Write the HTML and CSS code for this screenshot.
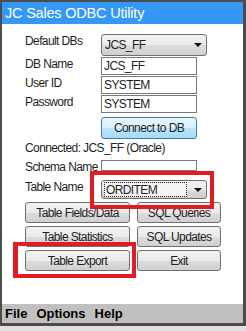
FILE: index.html
```html
<!DOCTYPE html>
<html>
<head>
    <title>JC Sales ODBC Utility</title>
    <link rel="stylesheet" href="styles.css">
</head>
<body>
    <div class="window">
        <div class="titlebar">JC Sales ODBC Utility</div>
        <div class="content">
            <div class="row">
                <label>Default DBs</label>
                <div class="combo"><span class="combo-text">JCS_FF</span><span class="arrow"></span></div>
            </div>
            <div class="row">
                <label>DB Name</label>
                <div class="field">JCS_FF</div>
            </div>
            <div class="row">
                <label>User ID</label>
                <div class="field">SYSTEM</div>
            </div>
            <div class="row">
                <label>Password</label>
                <div class="field">SYSTEM</div>
            </div>
            <div class="row">
                <label></label>
                <button class="connect">Connect to DB</button>
            </div>
            <p class="status">Connected: JCS_FF (Oracle)</p>
            <div class="row schema">
                <label>Schema Name</label>
                <div class="field short"></div>
            </div>
            <div class="row">
                <label>Table Name</label>
                <div class="combo table"><span class="combo-text focus">ORDITEM</span><span class="arrow"></span></div>
            </div>
            <div class="buttons">
                <button>Table Fields/Data</button>
                <button>SQL Queries</button>
                <button>Table Statistics</button>
                <button>SQL Updates</button>
                <button>Table Export</button>
                <button>Exit</button>
            </div>
        </div>
        <div class="menubar">
            <span>File</span>
            <span>Options</span>
            <span>Help</span>
        </div>
        <div class="mark mark-table"></div>
        <div class="mark mark-export"></div>
    </div>
</body>
</html>
```

FILE: styles.css
```css
body {
    margin: 0;
    background: #e2dedf;
    font-family: "Liberation Sans", Arial, sans-serif;
}
.window {
    position: relative;
    width: 241px;
    height: 321px;
    border: 2px solid #4c4c4c;
    border-right-width: 3px;
    border-bottom-width: 3px;
    background: white;
}
.titlebar {
    height: 22px;
    line-height: 22px;
    padding-left: 3px;
    background: #3598f6;
    color: white;
    font-size: 14.5px;
    letter-spacing: -0.2px;
}
.content {
    height: 270px;
    padding: 10px 0 0 23px;
    font-size: 12px;
    letter-spacing: -0.6px;
    color: #1e1e1e;
}
.row {
    display: flex;
    align-items: flex-start;
    margin-bottom: 1px;
}
.row.schema {
    margin-bottom: 6px;
}
.row label {
    width: 76px;
    flex: none;
    line-height: 14px;
}
.combo {
    width: 98px;
    height: 20px;
    border: 1px solid #707070;
    border-radius: 3px;
    background: linear-gradient(#f2f2f2, #ebebeb 50%, #dcdcdc 51%, #cfcfcf);
    display: flex;
    align-items: center;
    justify-content: space-between;
    padding: 0 4px 0 2px;
}
.combo-text {
    line-height: 14px;
    padding-left: 1px;
}
.arrow {
    width: 0;
    height: 0;
    border-left: 4px solid transparent;
    border-right: 4px solid transparent;
    border-top: 4px solid #111;
}
.combo.table {
    height: 17px;
}
.combo-text.focus {
    width: 80px;
    height: 13px;
    border: 1px dotted #222;
    background: #f4f4f4;
}
.field {
    width: 92px;
    height: 16px;
    line-height: 16px;
    padding-left: 2px;
    border: 1px solid #7a7a7a;
}
.field.short {
    height: 9px;
}
.connect {
    width: 96px;
    height: 22px;
    margin-top: 3px;
    border: 1px solid #3c7fb1;
    border-radius: 3px;
    background: linear-gradient(#eaf6fd, #d9f0fc 50%, #bee6fd 51%, #a7d9f5);
    font-family: inherit;
    font-size: 12px;
    letter-spacing: -0.6px;
    color: #1e1e1e;
    padding: 0;
}
.status {
    margin: 2px 0 5px;
    line-height: 14px;
}
.buttons {
    display: grid;
    grid-template-columns: 105px 84px;
    grid-auto-rows: 21px;
    gap: 3px 7px;
    margin-top: 3px;
}
.buttons button {
    border: 1px solid #707070;
    border-radius: 3px;
    background: linear-gradient(#f2f2f2, #ebebeb 50%, #dddddd 51%, #cfcfcf);
    font-family: inherit;
    font-size: 12px;
    letter-spacing: -0.6px;
    color: #1e1e1e;
    padding: 0;
}
.menubar {
    height: 19px;
    line-height: 19px;
    padding-left: 3px;
    background: #c0c0c0;
    font-size: 13px;
    font-weight: bold;
    display: flex;
    gap: 9px;
}
.mark {
    position: absolute;
    border: 4px solid #e31b23;
}
.mark-table {
    left: 88px;
    top: 169px;
    width: 116px;
    height: 30px;
}
.mark-export {
    left: 11px;
    top: 240px;
    width: 114px;
    height: 28px;
    border-left-width: 5px;
}
```
